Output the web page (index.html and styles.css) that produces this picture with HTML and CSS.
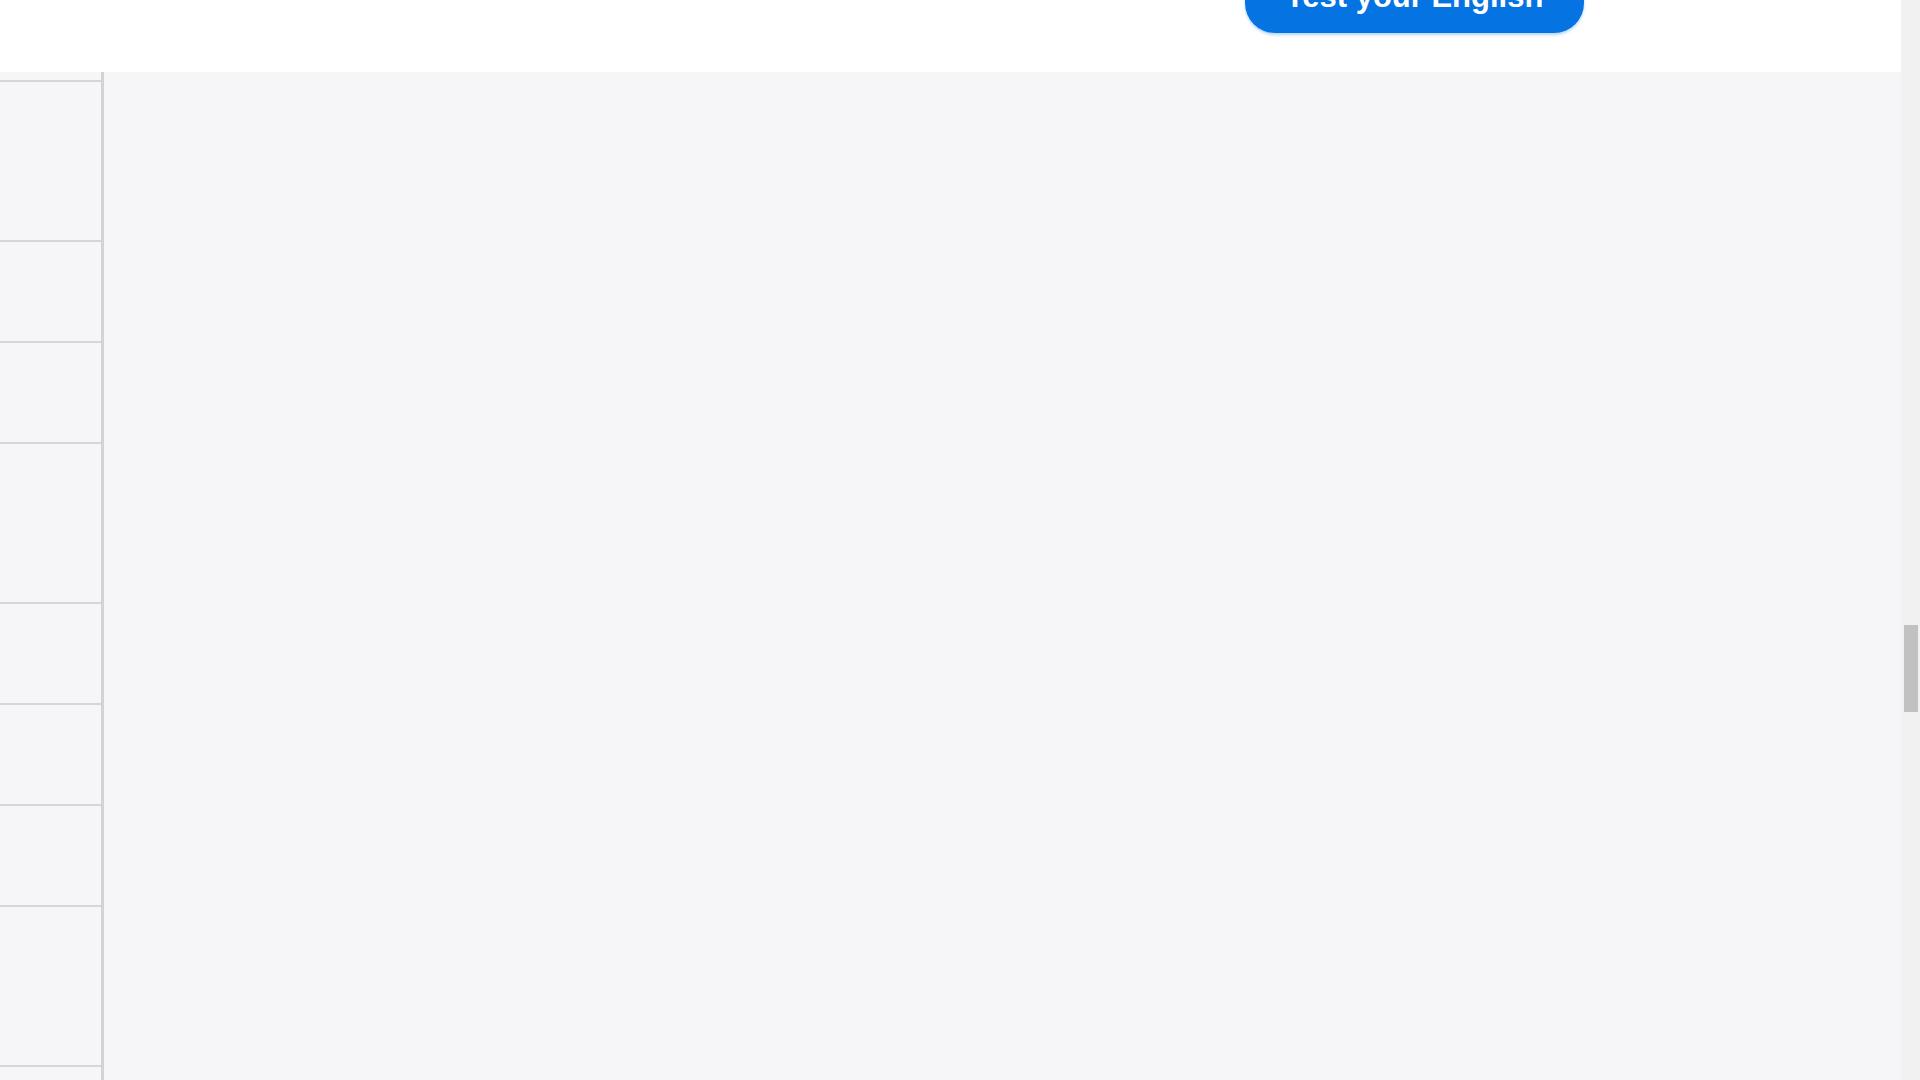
FILE: index.html
```html
<!DOCTYPE html>
<html lang="en">
<head>
<meta charset="utf-8">
<title>Test your English</title>
<link rel="stylesheet" href="styles.css">
</head>
<body>
<div class="viewport">
  <div class="page">
    <header class="header">
      <a class="cta" href="#">Test your English</a>
    </header>
    <main class="main">
      <aside class="side">
        <div class="row row-stub"></div>
        <div class="row row-tall"></div>
        <div class="row row-short"></div>
        <div class="row row-short"></div>
        <div class="row row-tall"></div>
        <div class="row row-short"></div>
        <div class="row row-short"></div>
        <div class="row row-short"></div>
        <div class="row row-tall"></div>
        <div class="row row-short"></div>
      </aside>
      <section class="content"></section>
    </main>
  </div>
  <div class="scrollbar">
    <div class="thumb"></div>
  </div>
</div>
</body>
</html>
```

FILE: styles.css
```css
* { box-sizing: border-box; }
html, body {
  margin: 0;
  padding: 0;
  width: 1920px;
  height: 1080px;
  overflow: hidden;
  font-family: "Liberation Sans", Arial, sans-serif;
  background: #f6f6f8;
}
.viewport {
  display: flex;
  width: 1920px;
  height: 1080px;
}
.page {
  flex: 1;
  display: flex;
  flex-direction: column;
  min-width: 0;
}
.header {
  height: 72px;
  flex: 0 0 72px;
  background: #ffffff;
  display: flex;
  justify-content: flex-end;
  align-items: flex-end;
  padding-right: 317px;
  overflow: hidden;
}
.cta {
  display: flex;
  align-items: center;
  justify-content: center;
  width: 339px;
  height: 74px;
  margin-bottom: 39px;
  border-radius: 30px;
  background: #0573e2;
  box-shadow: 0 2px 3px rgba(40, 140, 255, 0.35);
  color: #ffffff;
  font-weight: 700;
  font-size: 31px;
  text-decoration: none;
  padding-top: 2px;
}
.main {
  flex: 1;
  display: flex;
  background: #f6f6f8;
  min-height: 0;
}
.side {
  width: 104px;
  flex: 0 0 104px;
  border-right: 3px solid #d3d3d6;
  display: flex;
  flex-direction: column;
  overflow: hidden;
}
.row {
  flex: 0 0 auto;
  border-bottom: 2px solid #d6d6d9;
}
.row-stub { height: 10px; }
.row-tall { height: 160px; }
.row-short { height: 101px; }
.content {
  flex: 1;
  background: #f6f6f8;
}
.scrollbar {
  width: 19px;
  flex: 0 0 19px;
  background: #f1f1f1;
  display: flex;
  flex-direction: column;
  padding: 625px 2px 0 3px;
}
.thumb {
  height: 87px;
  background: #c1c1c1;
}
```
